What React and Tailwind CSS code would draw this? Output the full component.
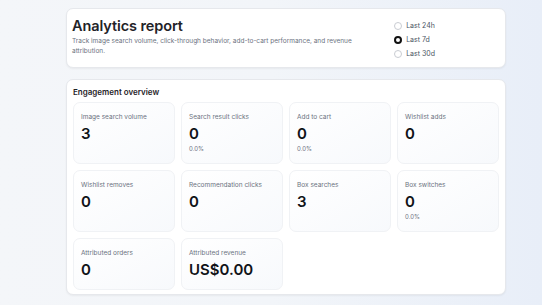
import React from "react";

const tiles = [
  { label: "Image search volume", value: "3" },
  { label: "Search result clicks", value: "0", pct: "0.0%" },
  { label: "Add to cart", value: "0", pct: "0.0%" },
  { label: "Wishlist adds", value: "0" },
  { label: "Wishlist removes", value: "0" },
  { label: "Recommendation clicks", value: "0" },
  { label: "Box searches", value: "3" },
  { label: "Box switches", value: "0", pct: "0.0%" },
  { label: "Attributed orders", value: "0" },
  { label: "Attributed revenue", value: "US$0.00" },
];

function Radio({ label, checked }) {
  return (
    <div className="flex items-center gap-[4px] h-[14px]">
      {checked ? (
        <span className="w-[8px] h-[8px] rounded-full border-[2px] border-[#111] bg-white" />
      ) : (
        <span className="w-[8px] h-[8px] rounded-full border border-[#c9ccd2] bg-white" />
      )}
      <span className="text-[7px] leading-[10px] text-[#4b5563]">{label}</span>
    </div>
  );
}

export default function App() {
  return (
    <div
      className="w-[542px] h-[305px] overflow-hidden bg-gradient-to-r from-[#f4f6f9] via-[#f2f5f9] to-[#e8eef8] pl-[66px] pr-[36px] pt-[8px] flex flex-col gap-[11px]"
      style={{ fontFamily: "Inter, 'Noto Sans', sans-serif" }}
    >
      <div className="h-[60px] rounded-[7px] bg-white border border-[#e6e8ec] shadow-[0_1px_2px_rgba(0,0,0,0.05)] flex pl-[5px] pt-[7px]">
        <div className="flex-1">
          <div className="text-[14.5px] leading-[20px] font-semibold text-[#1f2328] tracking-[-0.1px]">
            Analytics report
          </div>
          <div className="text-[6.5px] leading-[10px] text-[#6b7280] w-[290px]">
            Track image search volume, click-through behavior, add-to-cart performance, and revenue attribution.
          </div>
        </div>
        <div className="flex flex-col mr-[70px] pt-[3px]">
          <Radio label="Last 24h" />
          <Radio label="Last 7d" checked />
          <Radio label="Last 30d" />
        </div>
      </div>

      <div className="h-[216px] rounded-[7px] bg-white border border-[#e6e8ec] shadow-[0_1px_2px_rgba(0,0,0,0.05)] px-[6px] pt-[6px]">
        <div className="text-[8px] leading-[12px] font-semibold text-[#1f2328]">
          Engagement overview
        </div>
        <div className="grid grid-cols-4 gap-[6px] mt-[4px]">
          {tiles.map((t) => (
            <div
              key={t.label}
              className="rounded-[7px] border border-[#f0f2f5] bg-gradient-to-br from-white to-[#f7f9fc] px-[7px] pt-[9px] pb-[9px]"
            >
              <div className="text-[6.5px] leading-[10px] text-[#6b7280]">{t.label}</div>
              <div className="text-[15px] leading-[20px] font-semibold text-[#111318] mt-[2px]">
                {t.value}
              </div>
              {t.pct && (
                <div className="text-[6px] leading-[10px] text-[#6b7280]">{t.pct}</div>
              )}
            </div>
          ))}
        </div>
      </div>
    </div>
  );
}
